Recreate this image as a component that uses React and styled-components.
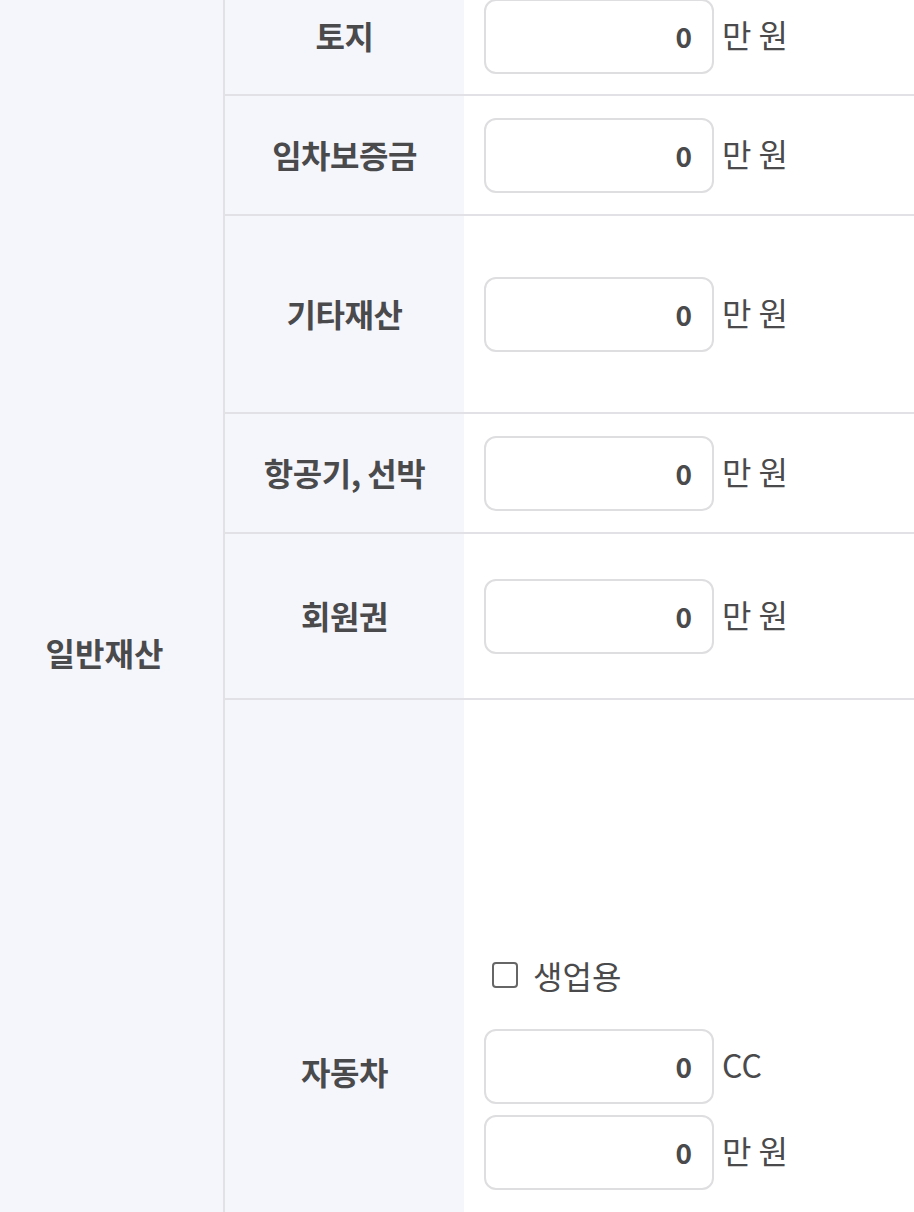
import React from "react";
import styled, { createGlobalStyle } from "styled-components";

const GlobalStyle = createGlobalStyle`
  html, body {
    margin: 0;
    padding: 0;
    background: #fff;
    font-family: "Noto Sans CJK KR", "Noto Sans", sans-serif;
    color: #4a4a4c;
  }
`;

const Page = styled.div`
  height: 1212px;
  overflow: hidden;
`;

const Table = styled.div`
  display: flex;
  margin-top: -142px;
`;

const GroupCell = styled.div`
  width: 225px;
  flex-shrink: 0;
  box-sizing: border-box;
  padding-right: 14px;
  background: #f5f6fb;
  border-right: 2px solid #e2e2e6;
  display: flex;
  align-items: center;
  justify-content: center;
  font-size: 32px;
  font-weight: 700;
`;

const Rows = styled.div`
  flex: 1;
  display: flex;
  flex-direction: column;
`;

const Row = styled.div`
  display: flex;
  box-sizing: border-box;
  height: ${props => props.height}px;
  border-bottom: 2px solid #e2e2e6;
`;

const Label = styled.div`
  width: 239px;
  flex-shrink: 0;
  background: #f5f6fb;
  display: flex;
  align-items: center;
  justify-content: center;
  padding-bottom: 2px;
  font-size: 32px;
  font-weight: 700;
  letter-spacing: -0.5px;
`;

const Value = styled.div`
  flex: 1;
  padding-left: 20px;
  display: flex;
  flex-direction: column;
  justify-content: center;
`;

const Field = styled.div`
  display: flex;
  align-items: center;
  gap: 8px;
  & + & {
    margin-top: 11px;
  }
`;

const Input = styled.input`
  box-sizing: border-box;
  width: 230px;
  height: 75px;
  border: 2px solid #dedee0;
  border-radius: 12px;
  background: #fff;
  padding: 0 20px 0 12px;
  text-align: right;
  font-family: inherit;
  font-size: 28px;
  font-weight: 700;
  color: #4a4a4c;
  outline: none;
`;

const Unit = styled.span`
  padding-bottom: 5px;
  font-size: 32px;
  color: #4a4a4c;
`;

const CheckLine = styled.label`
  display: flex;
  align-items: center;
  gap: 15px;
  height: 40px;
  margin-bottom: 34px;
  padding-left: 8px;
  font-size: 32px;
`;

const Box = styled.span`
  box-sizing: border-box;
  width: 26px;
  height: 26px;
  border: 2px solid #666;
  border-radius: 4px;
  background: #fff;
`;

const Amount = ({ unit = "만 원" }) => (
  <Field>
    <Input defaultValue="0" />
    <Unit>{unit}</Unit>
  </Field>
);

const items = [
  { label: "건물", height: 120 },
  { label: "토지", height: 118 },
  { label: "임차보증금", height: 120 },
  { label: "기타재산", height: 198 },
  { label: "항공기, 선박", height: 120 },
  { label: "회원권", height: 166 }
];

export default function App() {
  return (
    <>
      <GlobalStyle />
      <Page>
        <Table>
          <GroupCell>일반재산</GroupCell>
          <Rows>
            {items.map(item => (
              <Row key={item.label} height={item.height}>
                <Label>{item.label}</Label>
                <Value>
                  <Amount />
                </Value>
              </Row>
            ))}
            <Row height={746}>
              <Label>자동차</Label>
              <Value>
                <CheckLine>
                  <Box />
                  생업용
                </CheckLine>
                <Amount unit="CC" />
                <Amount />
              </Value>
            </Row>
          </Rows>
        </Table>
      </Page>
    </>
  );
}
